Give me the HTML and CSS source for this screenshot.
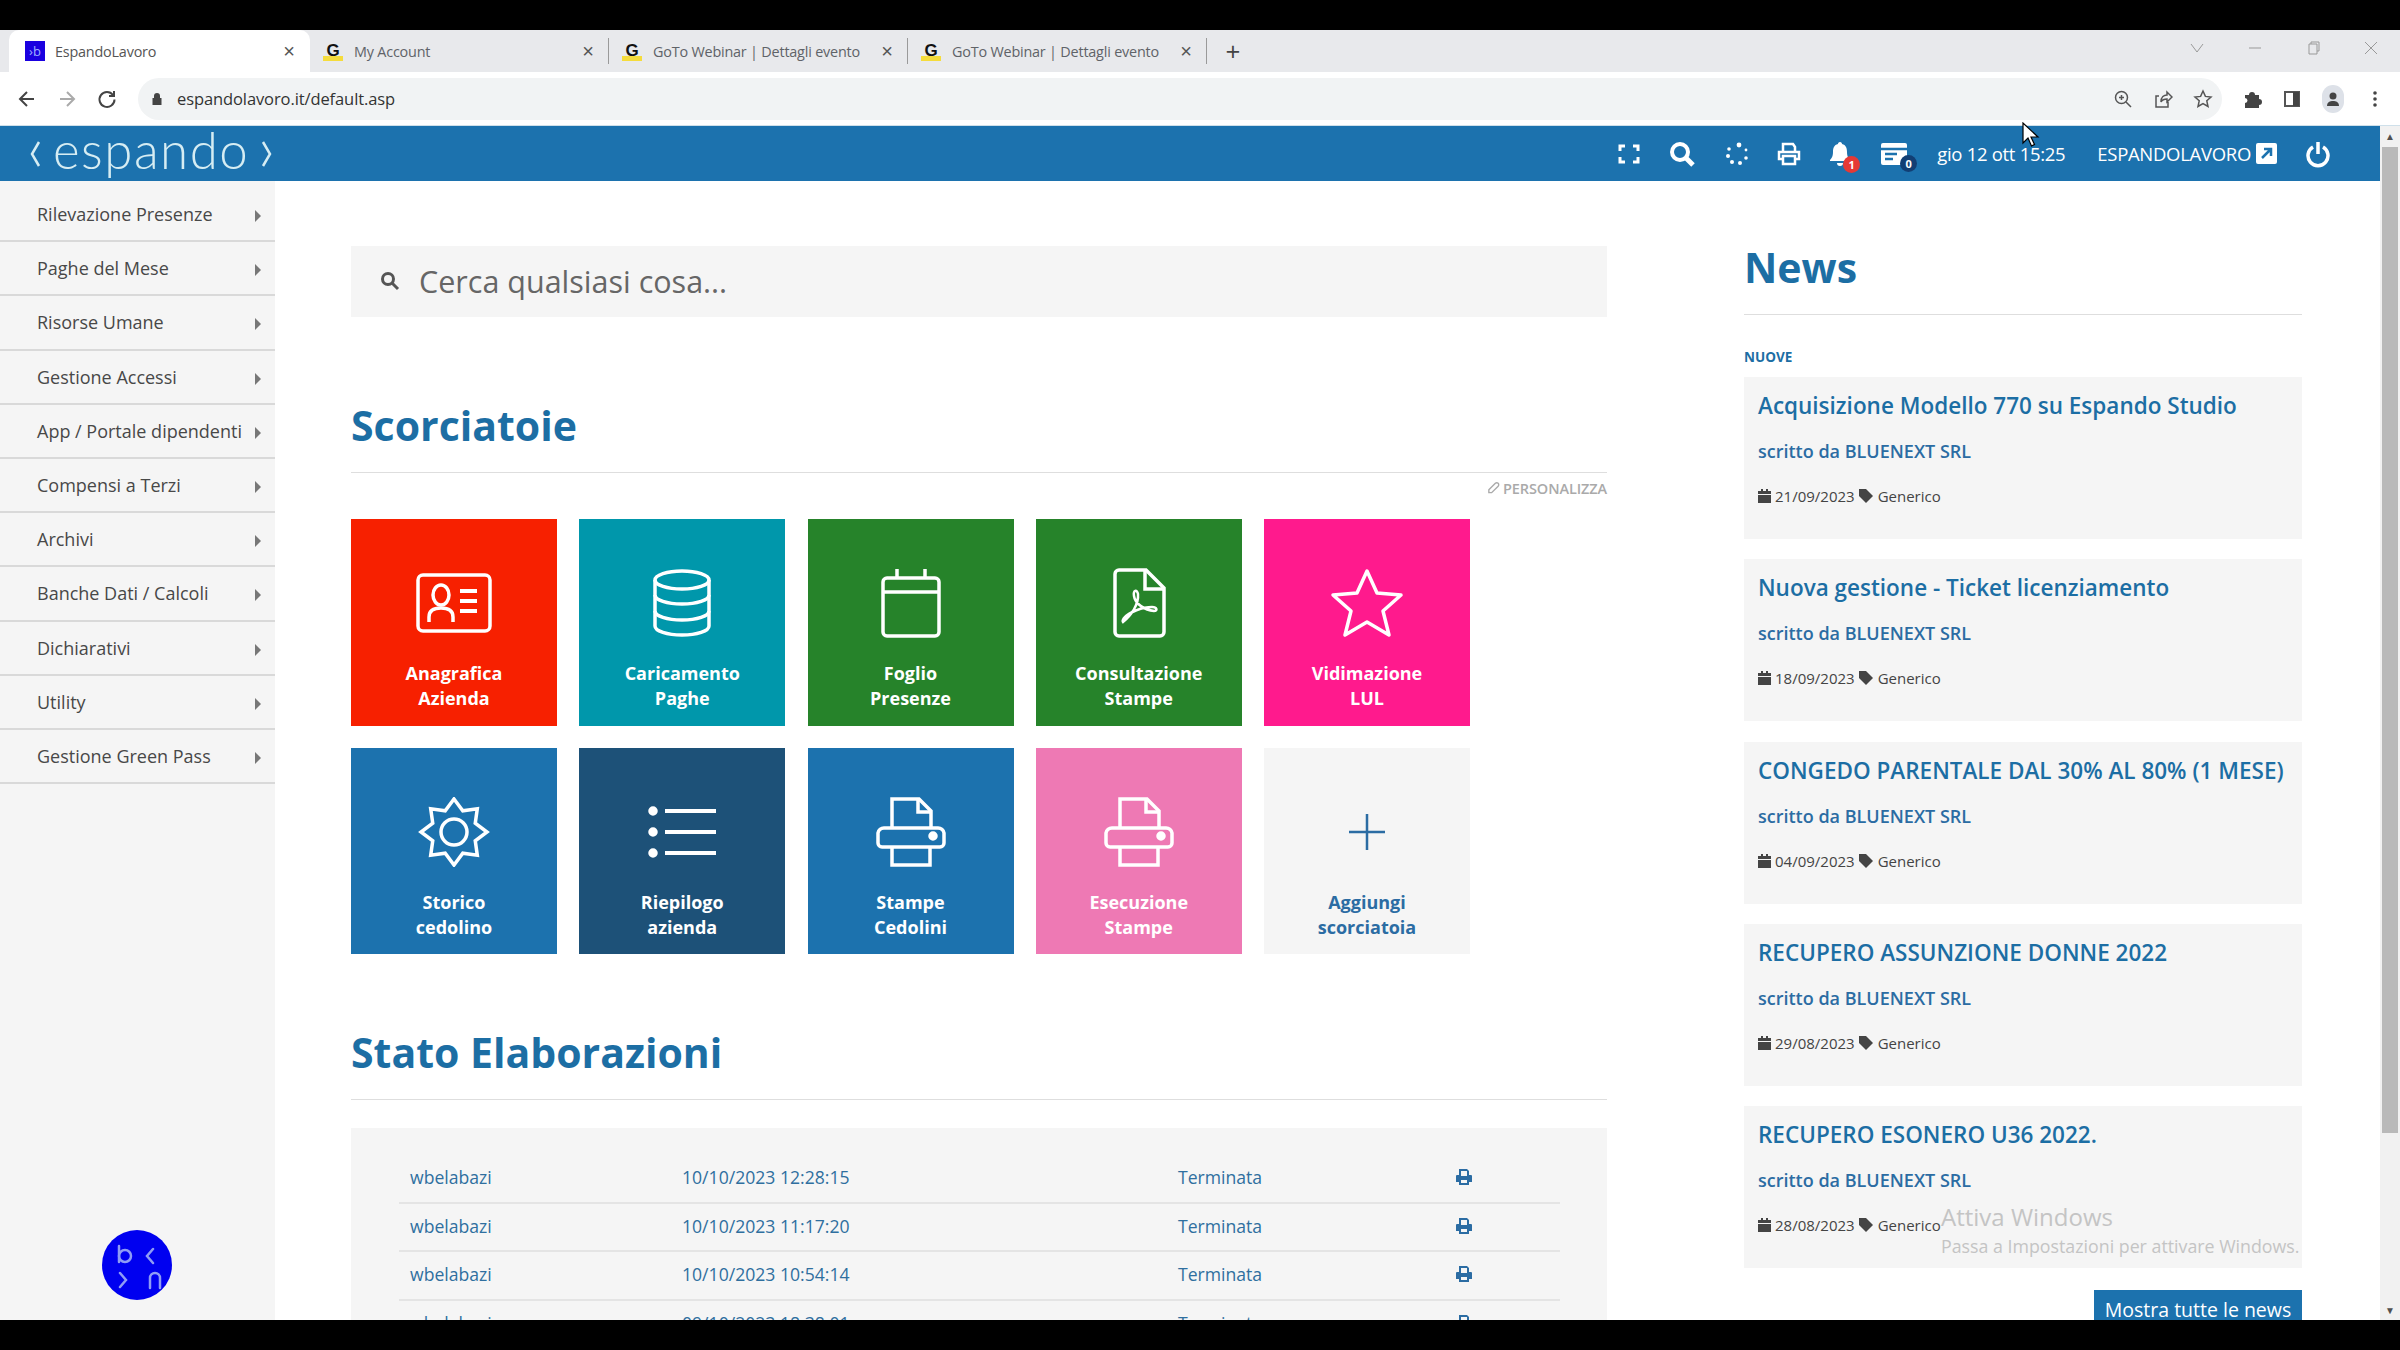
FILE: index.html
```html
<!DOCTYPE html>
<html lang="it">
<head>
    <meta charset="UTF-8">
    <title>EspandoLavoro</title>
    <link rel="stylesheet" href="styles.css">
</head>
<body>
    <svg class="sprite" xmlns="http://www.w3.org/2000/svg">
        <symbol id="i-card" viewBox="0 0 80 70">
            <rect x="4" y="7" width="72" height="56" rx="5"/>
            <ellipse cx="27" cy="27" rx="8" ry="10"/>
            <path d="M15 54v-5c0-6 4-9 12-9s12 3 12 9v5"/>
            <path d="M46 23h17M46 33h17M46 43h17" stroke-width="4"/>
        </symbol>
        <symbol id="i-db" viewBox="0 0 80 70">
            <ellipse cx="40" cy="12" rx="27" ry="9"/>
            <path d="M13 12v46c0 5 12 9 27 9s27-4 27-9V12"/>
            <path d="M13 27c0 5 12 9 27 9s27-4 27-9M13 43c0 5 12 9 27 9s27-4 27-9"/>
        </symbol>
        <symbol id="i-cal" viewBox="0 0 80 70">
            <rect x="12" y="10" width="56" height="58" rx="4"/>
            <path d="M12 24h56M26 1v9M54 1v9"/>
        </symbol>
        <symbol id="i-pdf" viewBox="0 0 80 70">
            <path d="M20 2h27l18 18v44a4 4 0 0 1-4 4H20a4 4 0 0 1-4-4V6a4 4 0 0 1 4-4z"/>
            <path d="M46 2v19h19"/>
            <path d="M24 54C32 48 40 36 39 26 38 21 34 22 35 28 36 36 46 42 55 43 59 43 58 39 53 39 44 39 30 44 25 50 23 53 24 54 24 54z" stroke-width="2.500"/>
        </symbol>
        <symbol id="i-star" viewBox="0 0 80 70">
            <path d="M40 3l10 22 24 2-18 16 6 24-22-13-22 13 6-24L6 27l24-2z" stroke-linejoin="round"/>
        </symbol>
        <symbol id="i-sun" viewBox="0 0 80 70">
            <path d="M40 2L48.800 13.750 63.300 11.700 61.250 26.200 73 35 61.250 43.800 63.300 58.300 48.800 56.250 40 68 31.200 56.250 16.700 58.300 18.750 43.800 7 35 18.750 26.200 16.700 11.700 31.200 13.750z"/>
            <circle cx="40" cy="35" r="13"/>
        </symbol>
        <symbol id="i-list" viewBox="0 0 80 70">
            <path d="M23 14h51M23 35h51M23 56h51" stroke-width="4"/>
            <circle cx="11" cy="14" r="3" fill="#fff"/>
            <circle cx="11" cy="35" r="3" fill="#fff"/>
            <circle cx="11" cy="56" r="3" fill="#fff"/>
        </symbol>
        <symbol id="i-print" viewBox="0 0 80 70">
            <path d="M21 31V2h27l12 12v17"/>
            <path d="M47 2v13h13"/>
            <path d="M21 50H11a4 4 0 0 1-4-4V36a6 6 0 0 1 6-5h54a6 6 0 0 1 6 5v10a4 4 0 0 1-4 4H59"/>
            <path d="M21 50h38M21 50v18h38V50"/>
            <circle cx="62" cy="39" r="3" fill="#fff"/>
        </symbol>
    </svg>

    <div class="black-bar"></div>

    <div class="tabstrip">
        <div class="tab active">
            <span class="favicon fav-b">›b</span>
            <span class="tab-title">EspandoLavoro</span>
            <span class="tab-close">×</span>
        </div>
        <div class="tab">
            <span class="favicon fav-g">G</span>
            <span class="tab-title">My Account</span>
            <span class="tab-close">×</span>
        </div>
        <div class="tab">
            <span class="favicon fav-g">G</span>
            <span class="tab-title">GoTo Webinar | Dettagli evento</span>
            <span class="tab-close">×</span>
        </div>
        <div class="tab">
            <span class="favicon fav-g">G</span>
            <span class="tab-title">GoTo Webinar | Dettagli evento</span>
            <span class="tab-close">×</span>
        </div>
        <span class="new-tab">+</span>
        <div class="window-controls">
            <svg width="14" height="14" viewBox="0 0 14 14"><path d="M1 3l6 8 6-8"/></svg>
            <svg width="14" height="14" viewBox="0 0 14 14"><path d="M1 7h12"/></svg>
            <svg width="14" height="14" viewBox="0 0 14 14"><path d="M3 3h8v10H3zM5 3V1h8v9h-2"/></svg>
            <svg width="14" height="14" viewBox="0 0 14 14"><path d="M1 1l12 12M13 1L1 13"/></svg>
        </div>
    </div>

    <div class="toolbar">
        <div class="nav-btns">
            <svg width="20" height="20" viewBox="0 0 20 20" class="nav-dark"><path d="M17 10H4M10 3l-7 7 7 7"/></svg>
            <svg width="20" height="20" viewBox="0 0 20 20" class="nav-light"><path d="M3 10h13M10 3l7 7-7 7"/></svg>
            <svg width="20" height="20" viewBox="0 0 20 20" class="nav-dark"><path d="M16 6a7.500 7.500 0 1 0 1.500 4.500M17 2v5h-5"/></svg>
        </div>
        <div class="urlbar">
            <svg width="12" height="14" viewBox="0 0 12 14"><path d="M3 6V4a3 3 0 0 1 6 0v2h1.500v7h-9V6z" fill="#444"/></svg>
            <span class="url-text">espandolavoro.it/default.asp</span>
            <div class="url-icons">
                <svg width="20" height="20" viewBox="0 0 20 20"><circle cx="8.500" cy="8.500" r="6"/><path d="M13 13l5 5M6 8.500h5M8.500 6v5"/></svg>
                <svg width="20" height="20" viewBox="0 0 20 20"><path d="M6 7H3v11h12v-5M8 13c0-5 3-7 6-7V3l5 5-5 5v-3c-3 0-5 1-6 3z"/></svg>
                <svg width="20" height="20" viewBox="0 0 20 20"><path d="M10 2l2.400 5.400 5.600.6-4.200 3.800 1.200 5.700L10 14.600 5 17.500l1.200-5.700L2 8l5.600-.6z"/></svg>
            </div>
        </div>
        <div class="browser-icons">
            <svg width="20" height="20" viewBox="0 0 20 20"><path class="solid" d="M3 6h4a3 3 0 0 1 6 0h4v4a3 3 0 0 1 0 6v3H3v-5a2.500 2.500 0 0 0 0-5z"/></svg>
            <svg width="20" height="20" viewBox="0 0 20 20"><path d="M3 3h14v14H3z" stroke-width="2"/><path class="solid" d="M11 3h6v14h-6z"/></svg>
            <span class="profile">
                <svg width="16" height="16" viewBox="0 0 16 16"><circle class="solid" cx="8" cy="5" r="3.500"/><path class="solid" d="M2 15c0-4 3-5 6-5s6 1 6 5z"/></svg>
            </span>
            <svg class="menu-dots" width="6" height="20" viewBox="0 0 6 20"><circle class="solid" cx="3" cy="4" r="1.800"/><circle class="solid" cx="3" cy="10" r="1.800"/><circle class="solid" cx="3" cy="16" r="1.800"/></svg>
        </div>
    </div>

    <div class="page-wrap">
        <div class="page">
            <header class="appbar">
                <div class="logo">
                    <svg width="12" height="28" viewBox="0 0 12 28"><path d="M10 2L3 14l7 12"/></svg>
                    <span class="logo-text">espando</span>
                    <svg width="12" height="28" viewBox="0 0 12 28"><path d="M2 2l7 12-7 12"/></svg>
                </div>
                <div class="appbar-right">
                    <svg class="bar-icon" width="24" height="24" viewBox="0 0 24 24"><path d="M3 9V4h5M16 4h5v5M21 15v5h-5M8 20H3v-5" stroke-width="3"/></svg>
                    <svg class="bar-icon icon-search" width="26" height="26" viewBox="0 0 26 26"><circle cx="11" cy="11" r="8" stroke-width="4"/><path d="M17 17l7 7" stroke-width="5"/></svg>
                    <svg class="bar-icon" width="24" height="24" viewBox="0 0 24 24"><g class="dots"><circle cx="14" cy="3" r="2.400"/><circle cx="21" cy="8" r="1.400"/><circle cx="21" cy="16" r="1.800"/><circle cx="15" cy="21" r="2"/><circle cx="7" cy="20" r="2"/><circle cx="3" cy="14" r="2"/><circle cx="4" cy="7" r="1.800"/></g></svg>
                    <svg class="bar-icon" width="24" height="24" viewBox="0 0 24 24"><path d="M6 9V2h10l2 3v4M6 17H2V10h20v7h-4M6 14h12v8H6z" stroke-width="2.500"/></svg>
                    <span class="bar-badge">
                        <svg width="22" height="26" viewBox="0 0 22 26"><path class="solid-white" d="M11 1c1.500 0 2 1 2 2 4 1 5 4 5 8 0 5 2 7 3 8v1H1v-1c1-1 3-3 3-8 0-4 1-7 5-8 0-1 .5-2 2-2zM8 22h6a3 3 0 0 1-6 0z"/></svg>
                        <span class="badge badge-red">1</span>
                    </span>
                    <span class="bar-badge">
                        <svg width="28" height="24" viewBox="0 0 28 24"><path class="solid-white" d="M3 1h22a2 2 0 0 1 2 2v18a2 2 0 0 1-2 2H3a2 2 0 0 1-2-2V3a2 2 0 0 1 2-2z"/><path d="M1 7h26M5 12h12M5 17h8" stroke="#1c72ae" stroke-width="2.500" fill="none"/></svg>
                        <span class="badge badge-navy">0</span>
                    </span>
                    <span class="bar-date">gio 12 ott 15:25</span>
                    <span class="bar-user">ESPANDOLAVORO</span>
                    <svg class="ext-icon" width="21" height="21" viewBox="0 0 21 21"><rect width="21" height="21" rx="2" fill="#fff"/><path d="M6 15L15 6M8 6h7v7" stroke="#1c72ae" stroke-width="2.500" fill="none"/></svg>
                    <svg class="bar-icon power" width="24" height="28" viewBox="0 0 24 28"><path d="M7 7a10 10 0 1 0 10 0M12 2v12" stroke-width="3.500"/></svg>
                </div>
            </header>

            <div class="main">
                <nav class="sidebar">
                    <ul class="menu">
                        <li>Rilevazione Presenze</li>
                        <li>Paghe del Mese</li>
                        <li>Risorse Umane</li>
                        <li>Gestione Accessi</li>
                        <li>App / Portale dipendenti</li>
                        <li>Compensi a Terzi</li>
                        <li>Archivi</li>
                        <li>Banche Dati / Calcoli</li>
                        <li>Dichiarativi</li>
                        <li>Utility</li>
                        <li>Gestione Green Pass</li>
                    </ul>
                    <div class="bubble">
                        <svg width="70" height="70" viewBox="0 0 70 70"><circle cx="35" cy="35" r="35" fill="#0000f0"/><g fill="none" stroke="#8f9cf5" stroke-width="2.500" stroke-linecap="round"><path d="M17 16v16"/><circle cx="23" cy="26" r="6"/><path d="M51 19l-6 7 6 7M18 43l6 7-6 7M48 58V48a5 5 0 0 1 10 0v10"/></g></svg>
                    </div>
                </nav>

                <div class="content">
                    <section class="left-col">
                        <div class="search">
                            <svg width="20" height="20" viewBox="0 0 20 20"><circle cx="8" cy="8" r="5.500"/><path d="M12 12l6 6"/></svg>
                            <span>Cerca qualsiasi cosa...</span>
                        </div>

                        <h2 class="section-title title-shortcuts">Scorciatoie</h2>
                        <div class="personalize">
                            <svg width="13" height="14" viewBox="0 0 14 14"><path d="M2 9l7-7a2 2 0 0 1 3 3l-7 7H2z"/></svg>
                            PERSONALIZZA
                        </div>

                        <div class="tiles">
                            <a class="tile tile-red"><svg><use href="#i-card"/></svg><span>Anagrafica<br>Azienda</span></a>
                            <a class="tile tile-teal"><svg><use href="#i-db"/></svg><span>Caricamento<br>Paghe</span></a>
                            <a class="tile tile-green"><svg><use href="#i-cal"/></svg><span>Foglio<br>Presenze</span></a>
                            <a class="tile tile-green"><svg><use href="#i-pdf"/></svg><span>Consultazione<br>Stampe</span></a>
                            <a class="tile tile-magenta"><svg><use href="#i-star"/></svg><span>Vidimazione<br>LUL</span></a>
                            <a class="tile tile-blue"><svg><use href="#i-sun"/></svg><span>Storico<br>cedolino</span></a>
                            <a class="tile tile-navy"><svg><use href="#i-list"/></svg><span>Riepilogo<br>azienda</span></a>
                            <a class="tile tile-blue"><svg><use href="#i-print"/></svg><span>Stampe<br>Cedolini</span></a>
                            <a class="tile tile-pink"><svg><use href="#i-print"/></svg><span>Esecuzione<br>Stampe</span></a>
                            <a class="tile tile-add">
                                <svg viewBox="0 0 80 70"><path d="M40 17v36M22 35h36"/></svg>
                                <span>Aggiungi<br>scorciatoia</span>
                            </a>
                        </div>

                        <h2 class="section-title title-status">Stato Elaborazioni</h2>
                        <div class="status-panel">
                            <div class="status-row">
                                <span>wbelabazi</span><span>10/10/2023 12:28:15</span><span>Terminata</span>
                                <svg width="18" height="18" viewBox="0 0 18 18"><path d="M4 7V1h8l2 2v4h2a1 1 0 0 1 1 1v6h-3v3H4v-3H1V8a1 1 0 0 1 1-1zM6 3v5h6V3M6 12v3h6v-3z" fill-rule="evenodd"/></svg>
                            </div>
                            <div class="status-row">
                                <span>wbelabazi</span><span>10/10/2023 11:17:20</span><span>Terminata</span>
                                <svg width="18" height="18" viewBox="0 0 18 18"><path d="M4 7V1h8l2 2v4h2a1 1 0 0 1 1 1v6h-3v3H4v-3H1V8a1 1 0 0 1 1-1zM6 3v5h6V3M6 12v3h6v-3z" fill-rule="evenodd"/></svg>
                            </div>
                            <div class="status-row">
                                <span>wbelabazi</span><span>10/10/2023 10:54:14</span><span>Terminata</span>
                                <svg width="18" height="18" viewBox="0 0 18 18"><path d="M4 7V1h8l2 2v4h2a1 1 0 0 1 1 1v6h-3v3H4v-3H1V8a1 1 0 0 1 1-1zM6 3v5h6V3M6 12v3h6v-3z" fill-rule="evenodd"/></svg>
                            </div>
                            <div class="status-row">
                                <span>wbelabazi</span><span>09/10/2023 18:38:01</span><span>Terminata</span>
                                <svg width="18" height="18" viewBox="0 0 18 18"><path d="M4 7V1h8l2 2v4h2a1 1 0 0 1 1 1v6h-3v3H4v-3H1V8a1 1 0 0 1 1-1zM6 3v5h6V3M6 12v3h6v-3z" fill-rule="evenodd"/></svg>
                            </div>
                        </div>
                    </section>

                    <aside class="news-col">
                        <h2 class="section-title">News</h2>
                        <div class="news-label">NUOVE</div>
                        <div class="news-list">
                            <article class="news-card">
                                <h3>Acquisizione Modello 770 su Espando Studio</h3>
                                <p class="news-author">scritto da BLUENEXT SRL</p>
                                <p class="news-meta">
                                    <svg width="13" height="14" viewBox="0 0 13 14"><path d="M3 0h2v2h3V0h2v2h3v3H0V2h3zM0 6h13v8H0z"/></svg>
                                    21/09/2023
                                    <svg width="15" height="14" viewBox="0 0 15 14"><path d="M0 0h7l7 7-7 7-7-7z"/></svg>
                                    Generico
                                </p>
                            </article>
                            <article class="news-card">
                                <h3>Nuova gestione - Ticket licenziamento</h3>
                                <p class="news-author">scritto da BLUENEXT SRL</p>
                                <p class="news-meta">
                                    <svg width="13" height="14" viewBox="0 0 13 14"><path d="M3 0h2v2h3V0h2v2h3v3H0V2h3zM0 6h13v8H0z"/></svg>
                                    18/09/2023
                                    <svg width="15" height="14" viewBox="0 0 15 14"><path d="M0 0h7l7 7-7 7-7-7z"/></svg>
                                    Generico
                                </p>
                            </article>
                            <article class="news-card">
                                <h3>CONGEDO PARENTALE DAL 30% AL 80% (1 MESE)</h3>
                                <p class="news-author">scritto da BLUENEXT SRL</p>
                                <p class="news-meta">
                                    <svg width="13" height="14" viewBox="0 0 13 14"><path d="M3 0h2v2h3V0h2v2h3v3H0V2h3zM0 6h13v8H0z"/></svg>
                                    04/09/2023
                                    <svg width="15" height="14" viewBox="0 0 15 14"><path d="M0 0h7l7 7-7 7-7-7z"/></svg>
                                    Generico
                                </p>
                            </article>
                            <article class="news-card">
                                <h3>RECUPERO ASSUNZIONE DONNE 2022</h3>
                                <p class="news-author">scritto da BLUENEXT SRL</p>
                                <p class="news-meta">
                                    <svg width="13" height="14" viewBox="0 0 13 14"><path d="M3 0h2v2h3V0h2v2h3v3H0V2h3zM0 6h13v8H0z"/></svg>
                                    29/08/2023
                                    <svg width="15" height="14" viewBox="0 0 15 14"><path d="M0 0h7l7 7-7 7-7-7z"/></svg>
                                    Generico
                                </p>
                            </article>
                            <article class="news-card">
                                <h3>RECUPERO ESONERO U36 2022.</h3>
                                <p class="news-author">scritto da BLUENEXT SRL</p>
                                <p class="news-meta">
                                    <svg width="13" height="14" viewBox="0 0 13 14"><path d="M3 0h2v2h3V0h2v2h3v3H0V2h3zM0 6h13v8H0z"/></svg>
                                    28/08/2023
                                    <svg width="15" height="14" viewBox="0 0 15 14"><path d="M0 0h7l7 7-7 7-7-7z"/></svg>
                                    Generico
                                </p>
                            </article>
                        </div>
                        <div class="news-more"><a class="news-btn">Mostra tutte le news</a></div>
                    </aside>
                </div>
            </div>
        </div>

        <div class="scrollbar">
            <span class="scroll-arrow">▲</span>
            <div class="scroll-track"><div class="scroll-thumb"></div></div>
            <span class="scroll-arrow">▼</span>
        </div>

        <!-- overlays from the screen recording -->
        <div class="watermark">
            <div class="wm-title">Attiva Windows</div>
            <div class="wm-sub">Passa a Impostazioni per attivare Windows.</div>
        </div>
    </div>

    <svg class="cursor" width="18" height="26" viewBox="0 0 18 26"><path d="M1 1v20l5-5 3.500 8 3-1.500L9 15h7z" fill="#fff" stroke="#000" stroke-width="1.200"/></svg>

    <div class="black-bar"></div>
</body>
</html>
```

FILE: styles.css
```css
* {
    margin: 0;
    padding: 0;
    box-sizing: border-box;
    font-family: 'Open Sans', 'Noto Sans', sans-serif;
}

body {
    width: 2400px;
    height: 1350px;
    overflow: hidden;
    display: flex;
    flex-direction: column;
    background: #000;
    position: relative;
}

.sprite {
    display: none;
}

.black-bar {
    height: 30px;
    flex: none;
    background: #000;
}

/* browser chrome */
.tabstrip {
    height: 42px;
    flex: none;
    background: #e8e9ec;
    display: flex;
    align-items: center;
    padding-left: 9px;
}

.tab {
    width: 299px;
    height: 42px;
    display: flex;
    align-items: center;
    gap: 11px;
    padding: 0 13px;
    position: relative;
    color: #5f6368;
    font-size: 14.400px;
}

.tab.active {
    width: 301px;
    padding-left: 16px;
    gap: 10px;
    background: #fff;
    border-radius: 10px 10px 0 0;
    color: #555;
}

.tab:nth-child(n+2)::after {
    content: "";
    position: absolute;
    right: 0;
    top: 8px;
    height: 26px;
    border-right: 1px solid #9a9a9a;
}

.tab-title {
    flex: 1;
    white-space: nowrap;
    letter-spacing: -.2px;
}

.tab-close {
    width: 16px;
    text-align: center;
    font-size: 20px;
    color: #555;
    font-family: 'Liberation Sans', sans-serif;
}

.favicon {
    width: 20px;
    height: 20px;
    flex: none;
    display: flex;
    align-items: center;
    justify-content: center;
}

.fav-b {
    background: #1a00e0;
    color: #9fb0ff;
    font-size: 13px;
}

.fav-g {
    color: #111;
    font-weight: 700;
    font-size: 17px;
    font-family: 'Liberation Sans', sans-serif;
    background: linear-gradient(#e8e9ec 75%, #f5dc3c 75%);
}

.new-tab {
    width: 52px;
    text-align: center;
    font-size: 26px;
    font-weight: 400;
    color: #444;
    line-height: 1;
}

.window-controls {
    margin-left: auto;
    margin-right: 22px;
    display: flex;
    gap: 44px;
    align-self: flex-start;
    padding-top: 11px;
}

.window-controls svg {
    fill: none;
    stroke: #999;
    stroke-width: 1;
}

.toolbar {
    height: 54px;
    flex: none;
    background: #fff;
    display: flex;
    align-items: center;
    border-bottom: 1px solid #cfe0ea;
    padding-left: 17px;
}

.nav-btns {
    width: 121px;
    display: flex;
    gap: 20px;
    flex: none;
}

.nav-btns svg {
    fill: none;
    stroke-width: 2;
}

.nav-dark {
    stroke: #444;
}

.nav-light {
    stroke: #aaa;
}

.urlbar {
    width: 2084px;
    height: 42px;
    flex: none;
    background: #f1f3f4;
    border-radius: 21px;
    display: flex;
    align-items: center;
    padding-left: 13px;
    gap: 14px;
}

.url-text {
    font-size: 16.500px;
    color: #333;
    letter-spacing: -.1px;
}

.url-icons {
    margin-left: auto;
    margin-right: 9px;
    display: flex;
    gap: 20px;
}

.url-icons svg,
.browser-icons svg {
    fill: none;
    stroke: #555;
    stroke-width: 1.500;
}

.browser-icons {
    display: flex;
    align-items: center;
    gap: 20px;
    margin-left: 20px;
}

.browser-icons .solid {
    fill: #444;
    stroke: none;
}

.browser-icons .menu-dots {
    margin-left: 8px;
}

.profile {
    width: 22px;
    height: 28px;
    border-radius: 11px;
    background: #dde1e8;
    display: flex;
    align-items: center;
    justify-content: center;
}

/* page inside the window */
.page-wrap {
    flex: 1;
    display: flex;
    min-height: 0;
    position: relative;
}

.page {
    width: 2380px;
    flex: none;
    display: flex;
    flex-direction: column;
    background: #fff;
    min-height: 0;
}

.appbar {
    height: 55px;
    flex: none;
    background: #1c72ae;
    display: flex;
    align-items: center;
    justify-content: space-between;
    padding: 0 50px 0 29px;
}

.logo {
    display: flex;
    align-items: center;
    gap: 12px;
}

.logo svg {
    fill: none;
    stroke: #d6edf3;
    stroke-width: 2.500;
}

.logo-text {
    font-family: 'Lato', sans-serif;
    font-weight: 300;
    font-size: 51px;
    line-height: 55px;
    color: #d6edf3;
    letter-spacing: 1.500px;
    position: relative;
    top: -4px;
}

.appbar-right {
    display: flex;
    align-items: center;
    color: #fff;
}

.bar-icon {
    fill: none;
    stroke: #fff;
    margin-right: 28px;
}

.bar-icon.icon-search {
    margin-right: 30px;
}

.dots circle {
    fill: #fff;
    stroke: none;
}

.bar-badge {
    position: relative;
    margin-right: 29px;
    display: flex;
}

.solid-white {
    fill: #fff;
}

.badge {
    position: absolute;
    right: -9px;
    bottom: -6px;
    width: 17px;
    height: 17px;
    border-radius: 50%;
    color: #fff;
    font-size: 11px;
    font-weight: 700;
    line-height: 17px;
    text-align: center;
}

.badge-red {
    background: #e53935;
}

.badge-navy {
    background: #123f74;
}

.bar-date {
    font-size: 18.500px;
    letter-spacing: -.3px;
    margin-right: 32px;
    white-space: nowrap;
}

.bar-user {
    font-size: 18.500px;
    letter-spacing: -.3px;
    margin-right: 5px;
}

.ext-icon {
    margin-right: 29px;
}

.bar-icon.power {
    margin-right: 0;
}

.main {
    flex: 1;
    display: flex;
    min-height: 0;
    overflow: hidden;
}

/* sidebar */
.sidebar {
    width: 275px;
    flex: none;
    background: #f5f5f5;
    position: relative;
    padding-top: 7px;
}

.menu {
    list-style: none;
}

.menu li {
    height: 54.200px;
    line-height: 53px;
    padding-left: 37px;
    font-size: 18px;
    color: #484848;
    border-bottom: 2px solid #d9d9d9;
    position: relative;
    white-space: nowrap;
}

.menu li::after {
    content: "";
    position: absolute;
    left: 255px;
    top: 22px;
    border-left: 6px solid #777;
    border-top: 6px solid transparent;
    border-bottom: 6px solid transparent;
}

.bubble {
    position: absolute;
    left: 102px;
    bottom: 20px;
    width: 70px;
    height: 70px;
}

/* main columns */
.content {
    flex: 1;
    display: flex;
    justify-content: space-between;
    padding: 0 78px 0 76px;
    min-width: 0;
}

.left-col {
    width: 1256px;
    flex: none;
    padding-top: 65px;
}

.news-col {
    width: 558px;
    flex: none;
    padding-top: 59px;
}

.search {
    height: 71px;
    background: #f5f5f5;
    display: flex;
    align-items: center;
    gap: 19px;
    padding: 0 0 2px 29px;
    color: #666;
    font-size: 30.500px;
}

.search svg {
    fill: none;
    stroke: #555;
    stroke-width: 3;
    flex: none;
}

.section-title {
    font-size: 41px;
    line-height: 54px;
    font-weight: 700;
    color: #1c6ea4;
    padding-bottom: 18px;
    border-bottom: 1px solid #dedede;
    height: 75px;
}

.title-shortcuts {
    margin-top: 81px;
}

.title-status {
    margin-top: 71px;
}

.personalize {
    height: 30px;
    display: flex;
    align-items: center;
    justify-content: flex-end;
    gap: 3px;
    font-size: 14.500px;
    font-weight: 600;
    color: #aaa;
    margin-bottom: 16px;
    letter-spacing: -.1px;
}

.personalize svg {
    fill: none;
    stroke: #aaa;
    stroke-width: 1.500;
}

.tiles {
    display: grid;
    grid-template-columns: repeat(5, 206px);
    grid-auto-rows: 206.500px;
    column-gap: 22.250px;
    row-gap: 22px;
}

.tile {
    display: flex;
    flex-direction: column;
    align-items: center;
    padding-top: 49px;
    color: #fff;
    font-size: 18px;
    font-weight: 700;
    line-height: 25px;
    text-align: center;
}

.tile svg {
    width: 80px;
    height: 70px;
    fill: none;
    stroke: #fff;
    stroke-width: 3.500;
    margin-bottom: 23px;
    flex: none;
}

.tile-red { background: #f72000; }
.tile-teal { background: #0097ab; }
.tile-green { background: #26832a; }
.tile-magenta { background: #ff1a8d; }
.tile-blue { background: #1c72ae; }
.tile-navy { background: #1d5178; }
.tile-pink { background: #ee79b4; }

.tile-add {
    background: #f5f5f5;
    color: #2b6ca3;
}

.tile-add svg {
    stroke: #2b6ca3;
    stroke-width: 2.500;
}

.status-panel {
    margin-top: 28px;
    height: 260px;
    background: #f5f5f5;
    padding: 27px 47px 0 48px;
}

.status-row {
    height: 48.500px;
    display: grid;
    grid-template-columns: 272px 496px 277px 1fr;
    align-items: center;
    padding-left: 11px;
    padding-bottom: 2px;
    font-size: 17.600px;
    color: #2f6f9f;
    border-bottom: 2px solid #e4e4e4;
}

.status-row svg {
    fill: #2b6ca3;
}

/* news */
.news-label {
    margin-top: 32px;
    height: 30px;
    line-height: 21px;
    font-size: 13.500px;
    font-weight: 700;
    color: #1c6ea4;
}

.news-list {
    display: flex;
    flex-direction: column;
    gap: 20.250px;
}

.news-card {
    height: 162px;
    background: #f5f5f5;
    padding: 13px 14px 0;
}

.news-card h3 {
    font-size: 22.500px;
    line-height: 32px;
    font-weight: 600;
    color: #1c6ea4;
    white-space: nowrap;
}

.news-author {
    margin-top: 16px;
    font-size: 18px;
    line-height: 26px;
    font-weight: 600;
    color: #2b6ca3;
}

.news-meta {
    margin-top: 22px;
    display: flex;
    align-items: center;
    gap: 4px;
    font-size: 15px;
    line-height: 20px;
    color: #444;
}

.news-meta svg {
    fill: #444;
    flex: none;
}

.news-more {
    display: flex;
    justify-content: flex-end;
    margin-top: 22px;
}

.news-btn {
    width: 208px;
    height: 44px;
    padding-top: 4px;
    background: #1c72ae;
    color: #fff;
    font-size: 19.500px;
    line-height: 32px;
    text-align: center;
    white-space: nowrap;
}

/* scrollbar */
.scrollbar {
    width: 20px;
    flex: none;
    background: #f1f1f1;
    display: flex;
    flex-direction: column;
    align-items: center;
}

.scroll-arrow {
    height: 20px;
    font-size: 10px;
    line-height: 20px;
    color: #505050;
    flex: none;
}

.scroll-track {
    flex: 1;
    width: 100%;
}

.scroll-thumb {
    height: 986px;
    background: #b9b9b9;
    margin: 1px 2px 0;
}

.watermark {
    position: absolute;
    left: 1941px;
    top: 1075px;
    color: #c4c4c4;
    white-space: nowrap;
}

.wm-title {
    font-size: 24px;
    line-height: 32px;
}

.wm-sub {
    font-size: 17.800px;
    line-height: 24px;
    margin-top: 1px;
}

.cursor {
    position: absolute;
    left: 2022px;
    top: 122px;
}
```
